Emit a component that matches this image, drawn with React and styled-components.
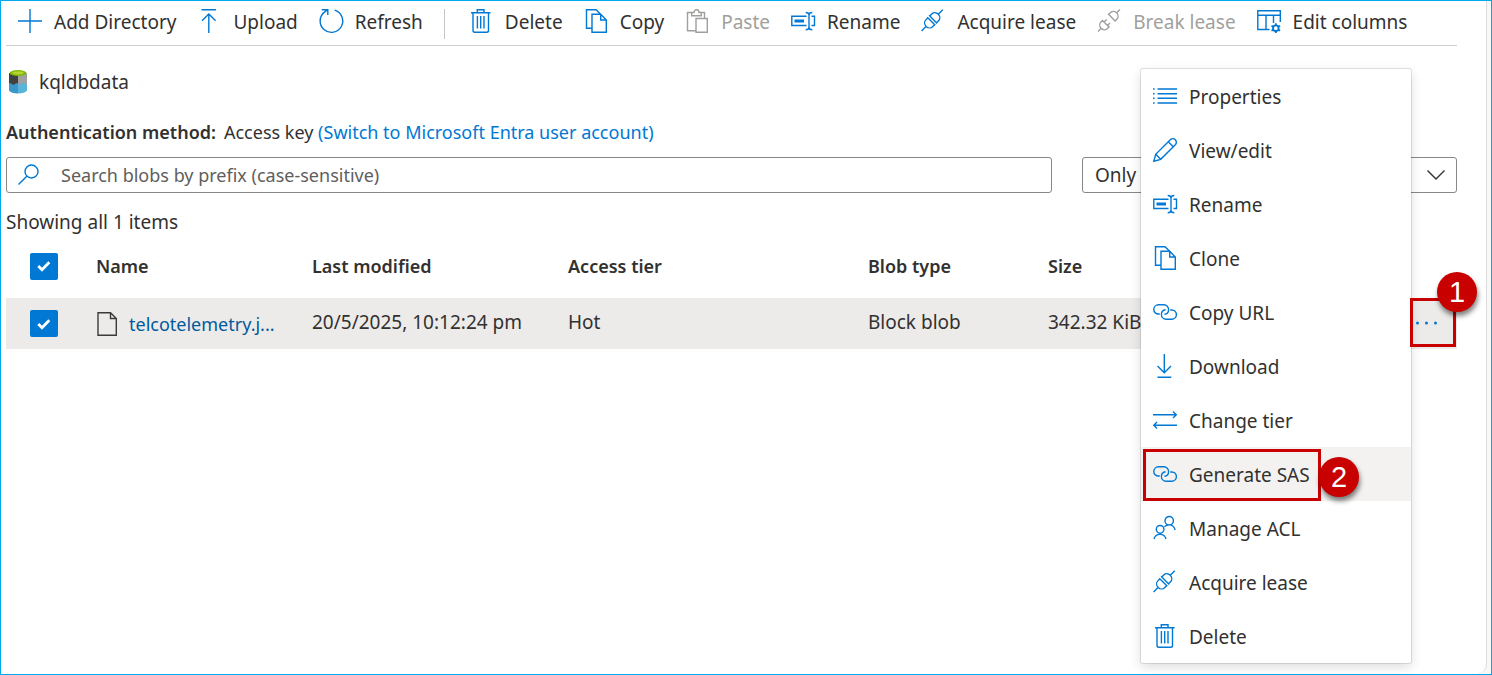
import React from "react";
import styled, { createGlobalStyle, css } from "styled-components";

const blue = "#0078d4";

const GlobalStyle = createGlobalStyle`
  *, *::before, *::after { box-sizing: border-box; }
  body {
    margin: 0;
    background: #fff;
    color: #323130;
    font-family: "Noto Sans", "Open Sans", sans-serif;
    font-size: 19px;
    line-height: 28px;
  }
  button, input, select { font: inherit; color: inherit; }
`;

const Frame = styled.div`
  display: flex;
  min-height: 100vh;
  padding-right: 4px;
  border: 1px solid #00a9ee;
  background: #f8f8f8;
`;

const Panel = styled.main`
  position: relative;
  flex: 1;
  min-width: 0;
  padding: 0 29px 0 5px;
  border-right: 1px solid #dcdcdc;
  border-bottom-right-radius: 10px;
  background: #fff;
`;

const Toolbar = styled.div`
  display: flex;
  align-items: center;
  gap: 21px;
  height: 45px;
  padding: 0 12px 4px;
  border-bottom: 1px solid #d2d0ce;
  white-space: nowrap;
`;

const ToolButton = styled.button`
  display: flex;
  align-items: center;
  gap: 12px;
  padding: 0;
  border: 0;
  background: none;
  color: ${(p) => (p.disabled ? "#a19f9d" : "#323130")};
`;

const Label = styled.span`
  padding-top: 2px;
`;

const Divider = styled.span`
  width: 1px;
  height: 30px;
  margin: 6px 3px 0 0;
  background: #c8c6c4;
`;

const Glyph = styled.svg`
  flex: none;
  display: block;
  overflow: visible;
  fill: none;
  stroke: ${(p) => p.$color || blue};
  stroke-width: 1.4;
`;

const ContainerName = styled.h1`
  display: flex;
  align-items: center;
  gap: 12px;
  margin: 22px 0;
  padding-left: 3px;
  font-size: 19px;
  font-weight: 400;
`;

const AuthLine = styled.p`
  margin: 0 0 11px;
  font-size: 18px;
`;

const AuthLabel = styled.strong`
  margin-right: 8px;
  font-weight: 600;
`;

const Link = styled.a`
  color: ${(p) => (p.$dark ? "#005a9e" : blue)};
  text-decoration: none;
`;

const Filters = styled.div`
  display: flex;
  gap: 30px;
`;

const SearchField = styled.label`
  display: flex;
  align-items: center;
  flex: 1;
  gap: 20px;
  height: 36px;
  padding: 0 10px;
  border: 1px solid #8a8886;
  border-radius: 3px;
  font-size: 18px;
`;

const SearchInput = styled.input`
  flex: 1;
  min-width: 0;
  padding: 0;
  border: 0;
  outline: 0;
  background: none;
  &::placeholder { color: #605e5c; opacity: 1; }
`;

const SelectField = styled.div`
  display: grid;
  flex: 0 1 375px;
  align-items: center;
  > * { grid-area: 1 / 1; }
  > svg { justify-self: end; margin-right: 12px; pointer-events: none; }
`;

const Select = styled.select`
  width: 100%;
  height: 36px;
  padding: 0 36px 0 12px;
  border: 1px solid #8a8886;
  border-radius: 3px;
  background: #fff;
  appearance: none;
`;

const Count = styled.p`
  margin: 15px 0 0;
`;

const Table = styled.table`
  width: 100%;
  table-layout: fixed;
  border-collapse: collapse;
  text-align: left;
  white-space: nowrap;
`;

const Column = styled.col`
  width: ${(p) => (p.$width ? p.$width + "px" : "auto")};
`;

const HeadCell = styled.th`
  height: 62px;
  padding: 0 0 2px;
  font-size: 18px;
  font-weight: 600;
`;

const Row = styled.tr`
  background: #edebe9;
`;

const Cell = styled.td`
  height: 51px;
  padding: 0 0 4px;
  ${(p) => p.$centered && css`padding: 0;`}
`;

const CheckWrap = styled.span`
  display: grid;
  width: 28px;
  margin-left: 24px;
  place-items: center;
  > * { grid-area: 1 / 1; }
  > svg { pointer-events: none; }
`;

const CheckInput = styled.input`
  width: 28px;
  height: 27px;
  margin: 0;
  border-radius: 2px;
  background: ${blue};
  appearance: none;
`;

const FileName = styled.span`
  display: flex;
  align-items: center;
  gap: 12px;
  font-size: 18px;
`;

const MoreButton = styled.button`
  position: relative;
  z-index: 3;
  display: flex;
  align-items: center;
  width: 46px;
  height: 49px;
  margin-bottom: 2px;
  padding: 0 2px;
  border: 3px solid #c80000;
  background: none;
`;

const Badge = styled.span`
  position: absolute;
  z-index: 3;
  display: grid;
  place-items: center;
  width: 40px;
  height: 40px;
  border-radius: 50%;
  background: #c80000;
  color: #fff;
  font-family: "Liberation Sans", Arial, sans-serif;
  font-size: 29px;
  box-shadow: 1px 4px 5px rgba(0, 0, 0, 0.5);
  ${(p) =>
    p.$place === "corner"
      ? css`top: -29px; right: -24px;`
      : css`top: 5px; right: -41px;`}
`;

const Menu = styled.ul`
  position: absolute;
  z-index: 2;
  top: 68px;
  right: 75px;
  width: 270px;
  margin: 0;
  padding: 0;
  border-radius: 2px;
  background: #fff;
  list-style: none;
  box-shadow: 0 0 0 1px rgba(0, 0, 0, 0.1), 0 4px 12px rgba(0, 0, 0, 0.14);
`;

const MenuItem = styled.li`
  position: relative;
  background: ${(p) => (p.$active ? "#f3f2f1" : "transparent")};
`;

const MenuButton = styled.button`
  display: flex;
  align-items: center;
  gap: 12px;
  width: 100%;
  height: 54px;
  padding: 0 12px;
  border: 0;
  background: none;
  text-align: left;
`;

const Marker = styled.span`
  position: absolute;
  top: 2px;
  left: 2px;
  width: 178px;
  height: 52px;
  border: 3px solid #c80000;
  pointer-events: none;
`;

const shapes = {
  add: <path d="M12 0V24M0 12H24" />,
  upload: <path d="M4.5 .8H19M11.8 24V5M5 11.8L11.8 5L18.6 11.8" />,
  refresh: <path d="M15.6 1.2A11.3 11.3 0 1 1 5.8 2.9L8.8 .8M2.8 .8H8.8V6" />,
  trash: (
    <path d="M2 3.7H21.5M8.3 3.7V.8H15V3.7M4 3.7V21.5Q4 23.3 5.8 23.3H17.7Q19.5 23.3 19.5 21.5V3.7M8.4 7V19.5M11.7 7V19.5M15 7V19.5" />
  ),
  copy: (
    <path d="M8 19.2H2.5V.7H12L16.7 5.3M8 5.3H16.7L22.3 11V23.3H8ZM16.7 5.3V11H22.3" />
  ),
  paste: (
    <path d="M11 21.7H2.5V3.5H7M16 3.5H19.5V9.5M6.7 6.7V3.5H9C9 -.2 14 -.2 14 3.5H16.3V6.7ZM11 9.5H22.3V23.3H11Z" />
  ),
  rename: (
    <>
      <path d="M15.5 7.3H.8V16.5H15.5M20.5 7.3H23.5V16.5H20.5M14.7 3.5Q18 3.5 18 6V18.2Q18 20.7 14.7 20.7M21.3 3.5Q18 3.5 18 6M21.3 20.7Q18 20.7 18 18.2" />
      <path d="M3.5 12H13" strokeWidth="3" />
    </>
  ),
  plug: (
    <path
      transform="translate(11.2 11.3) rotate(-45)"
      d="M-15 0H-8.5M8.5 0H15M-1.3-5.7V5.7M1.3-5.7V5.7M-1.3-4.8H-4.2A4.4 4.8 0 0 0-4.2 4.8H-1.3M1.3-4.8H4.2A4.4 4.8 0 0 1 4.2 4.8H1.3"
    />
  ),
  unplug: (
    <path
      transform="translate(12 11.5) rotate(-45)"
      d="M-15.5 0H-11M10.8 0H15.5M-4.6-5.4V5.4M4-5.4V5.4M-4.6-4.6H-6.8A4.3 4.6 0 0 0-6.8 4.6H-4.6M4-4.6H6.5A4.3 4.6 0 0 1 6.5 4.6H4M-4.6-2.4H-1M-4.6 2.4H-1"
    />
  ),
  columns: (
    <>
      <path d="M12.5 20.5H.8V1.7H23.3V13M.8 6.3H23.3M9 6.3V20.5M16.5 6.3V14" />
      <circle cx="18.8" cy="19.2" r="2.8" strokeWidth="1.8" />
      <path d="M18.8 14.3V16.4M18.8 22V24.1M14.5 16.7L16.4 17.8M21.2 20.6L23.1 21.7M14.5 21.7L16.4 20.6M21.2 17.8L23.1 16.7" strokeWidth="1.8" />
    </>
  ),
  list: (
    <path d="M4.5 5H24M4.5 9.7H24M4.5 14.3H24M4.5 19H24M0 5H1.6M0 9.7H1.6M0 14.3H1.6M0 19H1.6" />
  ),
  pencil: (
    <path d="M.8 23.2L2.7 16.3L17.3 1.7A3.4 3.4 0 0 1 22.3 6.7L7.7 21.3ZM2.7 16.3L7.7 21.3M15.3 3.7L20.3 8.7" />
  ),
  link: (
    <path d="M6.8 14H5.4A4.6 4.6 0 0 1 5.4 4.8H11A4.6 4.6 0 0 1 15.6 9.4Q15.6 13.8 11.4 14.3M17.2 10H18.8A4.6 4.6 0 0 1 18.8 19.2H13A4.6 4.6 0 0 1 8.4 14.6Q8.4 10.2 12.6 9.7" />
  ),
  download: <path d="M11.3 0V18.7M4.5 12L11.3 18.7L18 12M4.5 23.2H18.3" />,
  swap: <path d="M0 6.7H23.3M20 3.4L23.3 6.7L20 10M24 17.3H.8M4 14L.8 17.3L4 20.6" />,
  people: (
    <path d="M20.4 4.7A4.2 4.2 0 1 1 12 4.7A4.2 4.2 0 1 1 20.4 4.7ZM10.9 13.3A3.8 3.8 0 1 1 3.3 13.3A3.8 3.8 0 1 1 10.9 13.3ZM1 23A6.2 6.2 0 0 1 13 23M11.4 10.8Q13.3 8.9 16.2 8.9Q20.8 8.9 22.2 14" />
  ),
};

function Icon({ name, muted }) {
  return (
    <Glyph width="24" height="24" viewBox="0 0 24 24" $color={muted ? "#a19f9d" : blue} aria-hidden="true">
      {shapes[name]}
    </Glyph>
  );
}

function Tool({ icon, label, disabled }) {
  return (
    <ToolButton type="button" disabled={disabled}>
      <Icon name={icon} muted={disabled} />
      <Label>{label}</Label>
    </ToolButton>
  );
}

function Check({ label }) {
  return (
    <CheckWrap>
      <CheckInput type="checkbox" defaultChecked aria-label={label} />
      <Glyph width="14" height="12" viewBox="0 0 14 12" $color="#fff" aria-hidden="true">
        <path d="M1.3 6L5 9.7L12.3 2.3" strokeWidth="2.8" />
      </Glyph>
    </CheckWrap>
  );
}

function StorageIcon() {
  return (
    <Glyph width="18" height="24" viewBox="0 0 18 24" $color="none" aria-hidden="true">
      <path fill="#404040" d="M0 3H9V16H0Z" />
      <path fill="#a0a0a0" d="M9 3H18V16H9Z" />
      <path fill="#3b96c9" d="M0 13Q2 12.5 3.5 14.5Q5 15.5 6.5 13.5Q8 12.5 9 14V23.5Q2 23.5 0 20.5Z" />
      <path fill="#59b4d9" d="M9 14Q11 16 12.5 13.5Q14 11.5 15.5 13.5Q16.5 14.8 18 14V20.5Q16 23.5 9 23.5Z" />
      <ellipse fill="#7fba00" cx="9" cy="3" rx="8.5" ry="3" />
      <ellipse fill="#b8d432" cx="9" cy="2.8" rx="5.8" ry="1.6" />
    </Glyph>
  );
}

const menuItems = [
  ["list", "Properties"],
  ["pencil", "View/edit"],
  ["rename", "Rename"],
  ["copy", "Clone"],
  ["link", "Copy URL"],
  ["download", "Download"],
  ["swap", "Change tier"],
  ["link", "Generate SAS"],
  ["people", "Manage ACL"],
  ["plug", "Acquire lease"],
  ["trash", "Delete"],
];

export default function App() {
  return (
    <>
      <GlobalStyle />
      <Frame>
        <Panel>
          <Toolbar role="toolbar">
            <Tool icon="add" label="Add Directory" />
            <Tool icon="upload" label="Upload" />
            <Tool icon="refresh" label="Refresh" />
            <Divider />
            <Tool icon="trash" label="Delete" />
            <Tool icon="copy" label="Copy" />
            <Tool icon="paste" label="Paste" disabled />
            <Tool icon="rename" label="Rename" />
            <Tool icon="plug" label="Acquire lease" />
            <Tool icon="unplug" label="Break lease" disabled />
            <Tool icon="columns" label="Edit columns" />
          </Toolbar>

          <ContainerName>
            <StorageIcon />
            kqldbdata
          </ContainerName>
          <AuthLine>
            <AuthLabel>Authentication method:</AuthLabel>
            Access key <Link href="#switch">(Switch to Microsoft Entra user account)</Link>
          </AuthLine>

          <Filters>
            <SearchField>
              <Glyph width="24" height="24" viewBox="0 0 24 24" aria-hidden="true">
                <path d="M21 8.5A6.5 6.5 0 1 1 8 8.5A6.5 6.5 0 1 1 21 8.5ZM9.8 13.2L1.5 21.5" />
              </Glyph>
              <SearchInput
                type="text"
                aria-label="Search blobs"
                placeholder="Search blobs by prefix (case-sensitive)"
              />
            </SearchField>
            <SelectField>
              <Select aria-label="Blob visibility">
                <option>Only show active blobs</option>
              </Select>
              <Glyph width="18" height="10" viewBox="0 0 18 10" $color="#323130" aria-hidden="true">
                <path d="M.5 .5L9 9L17.5 .5" />
              </Glyph>
            </SelectField>
          </Filters>

          <Count>Showing all 1 items</Count>

          <Table>
            <colgroup>
              <Column $width={90} />
              <Column $width={216} />
              <Column $width={256} />
              <Column $width={300} />
              <Column $width={180} />
              <Column />
              <Column $width={47} />
            </colgroup>
            <thead>
              <tr>
                <HeadCell scope="col"><Check label="Select all" /></HeadCell>
                <HeadCell scope="col">Name</HeadCell>
                <HeadCell scope="col">Last modified</HeadCell>
                <HeadCell scope="col">Access tier</HeadCell>
                <HeadCell scope="col">Blob type</HeadCell>
                <HeadCell scope="col">Size</HeadCell>
                <HeadCell aria-label="Actions" />
              </tr>
            </thead>
            <tbody>
              <Row>
                <Cell $centered><Check label="Select telcotelemetry" /></Cell>
                <Cell $centered>
                  <FileName>
                    <Glyph width="21" height="24" viewBox="0 0 21 24" $color="#3b3a39" aria-hidden="true">
                      <path d="M2 .7H14.5L20.3 6.5V23.3H2ZM14.5 .7V6.5H20.3" />
                    </Glyph>
                    <Link $dark href="#blob">telcotelemetry.j...</Link>
                  </FileName>
                </Cell>
                <Cell>20/5/2025, 10:12:24 pm</Cell>
                <Cell>Hot</Cell>
                <Cell>Block blob</Cell>
                <Cell>342.32 KiB</Cell>
                <Cell $centered>
                  <MoreButton type="button" aria-label="More actions">
                    <Glyph width="24" height="4" viewBox="0 0 24 4" aria-hidden="true">
                      <g fill={blue} stroke="none">
                        <circle cx="2.5" cy="2" r="1.5" />
                        <circle cx="11.5" cy="2" r="1.5" />
                        <circle cx="20.5" cy="2" r="1.5" />
                      </g>
                    </Glyph>
                    <Badge $place="corner">1</Badge>
                  </MoreButton>
                </Cell>
              </Row>
            </tbody>
          </Table>

          <Menu>
            {menuItems.map(([icon, label]) => {
              const active = label === "Generate SAS";
              return (
                <MenuItem key={label} $active={active}>
                  <MenuButton type="button">
                    <Icon name={icon} />
                    <Label>{label}</Label>
                  </MenuButton>
                  {active && (
                    <Marker>
                      <Badge $place="side">2</Badge>
                    </Marker>
                  )}
                </MenuItem>
              );
            })}
          </Menu>
        </Panel>
      </Frame>
    </>
  );
}
